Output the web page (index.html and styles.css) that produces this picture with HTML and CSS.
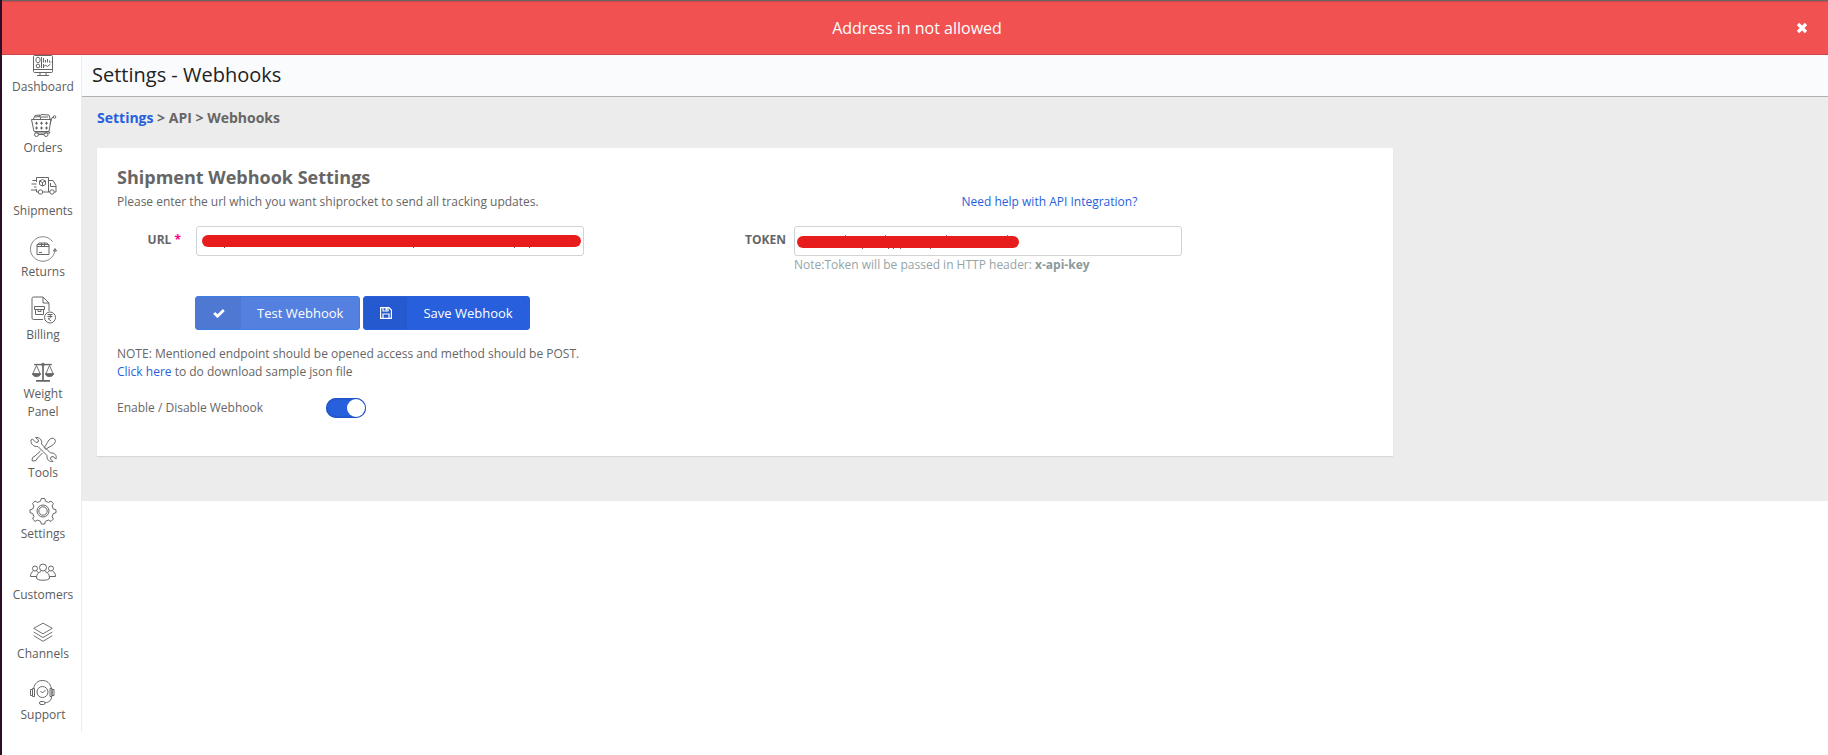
FILE: index.html
```html
<!DOCTYPE html>
<html lang="en">
<head>
<meta charset="utf-8">
<title>Settings - Webhooks</title>
<link rel="stylesheet" href="styles.css">
</head>
<body>
<div class="alert" role="alert">
  <span class="alert-text">Address in not allowed</span>
  <button class="alert-close" type="button" aria-label="Close">
    <svg width="12" height="12" viewBox="0 0 12 12"><path d="M2 2l8 8M10 2l-8 8" stroke="#fff" stroke-width="3.200"/></svg>
  </button>
</div>
<div class="layout">
  <nav class="sidebar">
    <a class="nav-item" href="#">
      <svg class="nav-icon" viewBox="0 0 28 28"><rect x="4.500" y="5.500" width="19" height="17" rx="1"/><path d="M4.500 19.500h19M11 22.500v3M17 22.500v3M8 25.500h12M12.500 7v11"/><path d="M7 8.500L9 7l2 1.500v3L9 13l-2-1.500zM14.500 12.500V8M16.500 12.500V10M18.500 12.500V9M20.500 12.500v-2M22 12.500v-1M14.500 17l2-2 2 1.500 3-2.500M14.500 14v4"/><circle cx="9" cy="16" r="1.800"/></svg>
      <span>Dashboard</span></a>
    <a class="nav-item" href="#">
      <svg class="nav-icon" viewBox="0 0 28 28"><path d="M2.500 8.500h19.500l-2 12H5zM21 13l2-6.500h1.500M20 20.500l1 1.500H6.500"/><circle cx="25.500" cy="6" r="1.300"/><path d="M4.500 8L6 4.500l5-.5.500 4M10.500 5l1.500-1.500 8 .5 1 4M6 6l5-.5M12 6h7"/><path d="M6 12.200h3M7.500 10.700v3M11 12.200h3M12.500 10.700v3M16 12.200h3M17.500 10.700v3M6 17h3M7.500 15.500v3M11 17h3M12.500 15.500v3M16 17h3M17.500 15.500v3"/><circle cx="7.500" cy="23.500" r="2"/><circle cx="17" cy="23.500" r="2"/><path d="M9.500 23.500H15"/></svg>
      <span>Orders</span></a>
    <a class="nav-item tall" href="#">
      <svg class="nav-icon" viewBox="0 0 28 28"><path d="M9.500 20h-2v-3M7.500 10V5.500h12V20H14M19.500 8.500h4.500l3 5V20h-1.500M21 20h-1.500M21.500 11v3.500H27M3.500 8.500h4M2.500 12h5M5 15h2.500M2 18h5.500"/><circle cx="11.500" cy="20" r="2.200"/><circle cx="23" cy="20" r="2.200"/><path d="M13.500 7.500l3 1.500v3.500l-3 1.500-3-1.500V9zM10.500 9l3 1.500 3-1.500M13.500 10.500V14"/></svg>
      <span>Shipments</span></a>
    <a class="nav-item" href="#">
      <svg class="nav-icon" viewBox="0 0 28 28"><path d="M23.500 6.500A12.300 12.300 0 1 0 26 15" stroke="#888"/><path d="M24.500 16l1.500-2.500 1.500 2.500z"/><rect x="8" y="9.500" width="12" height="10"/><path d="M8 10.500l2-2.500h8l2 2.500M8 11.500h12M12.500 8v3.500h3V8M10 17.500h3"/></svg>
      <span>Returns</span></a>
    <a class="nav-item tall" href="#">
      <svg class="nav-icon" viewBox="0 0 28 28"><path d="M14 23.500H4.500a1.500 1.500 0 0 1-1.500-1.500V2.500A1.500 1.500 0 0 1 4.500 1H14l6 6v8M14 1v6h6"/><path d="M5.500 10.500h10v3h-10zM6.500 13.500h8v5h-8zM9 13.500v2h3v-2"/><circle cx="21" cy="21.500" r="5.500"/><path d="M18.500 18.500h5M18.500 20.500h5M19 18.500c4 0 4 4 0 4l3 2.500"/></svg>
      <span>Billing</span></a>
    <a class="nav-item short" href="#">
      <svg class="nav-icon" viewBox="0 0 28 28"><path d="M14 6v17M6.500 23.500h15" stroke-width="1.800"/><path d="M4.500 6h19" stroke-width="1.500"/><circle cx="14" cy="6" r="1.500"/><path d="M7 7l-4 9h8zM21 7l-4 9h8z"/><path d="M2.500 16c1 4 8 4 9 0zM16.500 16c1 4 8 4 9 0z" class="solid"/></svg>
      <span>Weight<br>Panel</span></a>
    <a class="nav-item" href="#">
      <svg class="nav-icon" viewBox="0 0 28 28"><path d="M3.500 3L7 6.500 9 6l.500-2L6.500 1.500c4-.5 7 2.500 6 6.500l9 9c4-.5 6.500 2 5.500 6l-3-2.500-2 .5-.500 2 2.500 2.500c-4 .5-6.500-2-6-6l-9-9C4.500 11 1.500 8 2 4z"/><path d="M15 11.500c2-1 2.500-4.500 5-7.500 2-2 4-2.500 5.500-1s1 3.500-1 5.500c-3 2.500-6.500 3-7.500 5M11.500 15L6 20l-2.500 1.500-.5 3 1 .5 3-.5L8.500 22l5-5M15 11.500l2 2"/></svg>
      <span>Tools</span></a>
    <a class="nav-item" href="#">
      <svg class="nav-icon" viewBox="0 0 28 28"><path d="M11.500 4.200l.8-2.700h3.400l.8 2.700 3 1.200 2.500-1.300 2.400 2.400-1.300 2.500 1.200 3 2.700.8v2.900l-2.700.8-1.200 3 1.300 2.500-2.400 2.400-2.500-1.300-3 1.200-.8 2.700h-3.400l-.8-2.700-3-1.200L6 24.400 3.600 22l1.300-2.500-1.200-3-2.700-.8v-2.900l2.700-.8 1.200-3-1.300-2.500L6 4.100l2.500 1.300z"/><circle cx="14" cy="14" r="6"/><circle cx="14" cy="14" r="4.200"/></svg>
      <span>Settings</span></a>
    <a class="nav-item" href="#">
      <svg class="nav-icon" viewBox="0 0 28 28"><circle cx="14" cy="9.500" r="3.500"/><path d="M12 13.500c-3 1-4.500 3-4.500 6.500 0 3 13 3 13 0 0-3.500-1.500-5.500-4.500-6.500"/><circle cx="6" cy="10.500" r="2.500"/><circle cx="22" cy="10.500" r="2.500"/><path d="M4.500 13C2.500 14 1.500 16 1.500 18.500h6M23.500 13c2 1 3 3 3 5.500h-6M7.500 13l2 1.500M20.500 13l-2 1.500"/></svg>
      <span>Customers</span></a>
    <a class="nav-item short" href="#">
      <svg class="nav-icon" viewBox="0 0 28 28"><path d="M14 4.500l10 5.500-10 6L4 10zM4 14l10 6 10-6M4 18l10 6 10-6"/></svg>
      <span>Channels</span></a>
    <a class="nav-item" href="#">
      <svg class="nav-icon" viewBox="0 0 28 28"><circle cx="13.500" cy="14" r="5.500"/><path d="M11.500 13l2 2 3-3"/><path d="M4.500 10.500C6 5 9 2.500 13.500 2.500S21 5 22.500 10.500M22.500 18.500c0 4-2.500 6-6.500 6.200"/><path d="M1.500 11.500h2v6h-2zM3.500 10.500h2v8h-2zM21 10.500h2v8h-2zM23 11.500h2v6h-2z"/><rect x="10.500" y="23.500" width="5.500" height="3" rx="1.500"/></svg>
      <span>Support</span></a>
  </nav>
  <main class="main">
    <header class="page-head"><h1 class="page-title">Settings - Webhooks</h1></header>
    <div class="content">
      <div class="crumbs"><a href="#">Settings</a> &gt; API &gt; Webhooks</div>
      <div class="columns">
        <section class="card">
          <div class="card-head">
            <div class="card-intro">
              <h2 class="card-title">Shipment Webhook Settings</h2>
              <p class="text">Please enter the url which you want shiprocket to send all tracking updates.</p>
            </div>
            <a class="help" href="#">Need help with API Integration?</a>
          </div>
          <form class="form">
            <div class="fields">
              <label class="label label-url" for="url">URL <span class="required">*</span></label>
              <div class="field"><input class="input" id="url" type="text"><span class="mark mark-url"></span></div>
              <label class="label" for="token">TOKEN</label>
              <div class="field"><input class="input" id="token" type="text"><span class="mark mark-token"></span>
                <p class="hint">Note:Token will be passed in HTTP header: <b>x-api-key</b></p></div>
            </div>
            <div class="actions">
              <button class="btn btn-test" type="button"><span class="btn-icon"><svg width="12" height="10" viewBox="0 0 12 10"><path d="M1.200 5l3.300 3.200L10.800 2" fill="none" stroke="#fff" stroke-width="2.800"/></svg></span><span class="btn-text">Test Webhook</span></button>
              <button class="btn btn-save" type="button"><span class="btn-icon"><svg width="12" height="12" viewBox="0 0 12 12"><path d="M.6.600H9L11.400 3v8.400H.6zM3 .6v3.400h5V.6M3 11.400V7h6v4.400" fill="none" stroke="#fff" stroke-width="1.200"/><path d="M5.500 1h1.500v2.400H5.500z" fill="#fff"/></svg></span><span class="btn-text">Save Webhook</span></button>
            </div>
            <p class="text">NOTE: Mentioned endpoint should be opened access and method should be POST.<br><a href="#">Click here</a> to do download sample json file</p>
            <div class="toggle-row">
              <label class="text" for="enabled">Enable / Disable Webhook</label>
              <input class="toggle" id="enabled" type="checkbox" role="switch" checked>
            </div>
          </form>
        </section>
      </div>
    </div>
  </main>
</div>
</body>
</html>
```
FILE: styles.css
```css
* { box-sizing: border-box; }
body {
  margin: 0;
  min-height: 100vh;
  border-left: 2px solid #2c0f27;
  background: #fff;
  color: #666;
  font: 12px/18px "Open Sans", sans-serif;
}
h1, h2, p { margin: 0; }
a { color: #275fdc; text-decoration: none; }

.alert {
  position: absolute;
  top: 0;
  left: 2px;
  right: 0;
  z-index: 2;
  display: flex;
  align-items: center;
  height: 55px;
  border-top: 1px solid #666;
  border-bottom: 1px solid #d04747;
  background: #f15151;
  box-shadow: inset 0 1px #d04747;
  color: #fff;
}
.alert-text { flex: 1; padding-left: 40px; text-align: center; font-size: 16px; line-height: 24px; }
.alert-close {
  display: flex;
  margin-right: 16px;
  padding: 4px;
  border: 0;
  background: none;
}

.layout { display: flex; align-items: flex-start; }
.sidebar {
  display: flex;
  flex: 0 0 80px;
  flex-direction: column;
  gap: 15px;
  padding: 50px 0 8px 3px;
  border-right: 1px solid #ececec;
}
.nav-item {
  display: flex;
  flex-direction: column;
  align-items: center;
  color: #5c5c5c;
  text-align: center;
}
.nav-icon {
  width: 28px;
  height: 28px;
  fill: none;
  stroke: #666;
  stroke-width: 1;
  stroke-linejoin: round;
}
.nav-icon .solid { fill: #666; }
.tall .nav-icon { height: 30px; padding-bottom: 2px; }
.short .nav-icon { height: 26px; }

.main { flex: 1; }
.page-head {
  padding: 60px 10px 6px;
  border-bottom: 1px solid #b0b0b0;
  background: #fafbfd;
}
.page-title { color: #222; font-size: 20px; font-weight: 400; line-height: 30px; }
.content { padding: 11px 0 45px 15px; background: #ececec; }
.crumbs { margin-bottom: 20px; font-size: 14px; font-weight: 700; line-height: 20px; }
.columns { display: grid; grid-template-columns: 3fr 1fr; gap: 3px; }
.card { padding: 17px 20px 38px; background: #fff; box-shadow: 0 1px 1px #d8d8d8; }
.card-head { display: flex; align-items: flex-end; }
.card-intro { flex: 0 0 67%; }
.card-title { margin-bottom: 4px; font-size: 18px; font-weight: 700; line-height: 24px; }
.help { padding-left: 3px; }

.fields {
  display: grid;
  grid-template-columns: 79px 1fr 210px 1fr;
  padding: 15px 191px 22px 0;
}
.label { padding: 5px 8px 0 0; text-align: right; font-weight: 700; }
.label-url { padding-right: 15px; }
.required { color: #ff0084; }
.field { position: relative; }
.input {
  display: block;
  width: 100%;
  height: 30px;
  padding: 4px 8px;
  border: 1px solid #cfd4d6;
  border-radius: 3px;
  background: #fff;
  font: inherit;
}
.mark {
  position: absolute;
  top: 9px;
  left: 6px;
  right: 3px;
  height: 12px;
  border-radius: 6px;
  background: #e71c1c;
}
.mark-token { top: 10px; left: 3px; right: 42%; }
.mark::after { content: ""; position: absolute; width: 1px; height: 1px; }
.mark-url::after {
  top: 12px;
  left: 22px;
  background: #555;
  box-shadow: 189px 0 #555, 290px 0 #555, 305px 0 #555;
}
.mark-token::after {
  top: 12px;
  left: 65px;
  background: #666;
  box-shadow: 26px 0 #666, 31px 0 #666, 38px 0 #666, 68px 0 #666, -17px -13px #a66, 23px -13px #a66, 84px -13px #a66, 145px -13px #a66;
}
.hint { color: #95a5a6; }
.hint b { color: #8a999b; }

.actions { display: flex; gap: 3px; margin-bottom: 15px; padding-left: 78px; }
.btn {
  display: flex;
  height: 34px;
  padding: 0;
  overflow: hidden;
  border: 1px solid #3c7de6;
  border-radius: 3px;
  background: #5480e0;
  color: #fff;
  font: 13px/32px "Open Sans", sans-serif;
}
.btn-icon {
  display: flex;
  align-items: center;
  justify-content: center;
  width: 45px;
  height: 32px;
  background: rgba(0, 0, 0, 0.06);
}
.btn-text { padding: 0 16px; }
.btn-save { border-color: #275fdc; background: #275fdc; }
.btn-save .btn-icon { width: 43px; }

.toggle-row { display: flex; align-items: center; margin-top: 17px; }
.toggle-row .text { flex: 0 0 209px; }
.toggle {
  appearance: none;
  display: flex;
  justify-content: flex-end;
  width: 40px;
  height: 20px;
  margin: 0;
  padding: 1px;
  border-radius: 10px;
  background: #275fdc;
  box-shadow: inset 0 0 2px 1px #1f50be;
}
.toggle::before { content: ""; width: 18px; height: 18px; border-radius: 50%; background: #fff; }
```
